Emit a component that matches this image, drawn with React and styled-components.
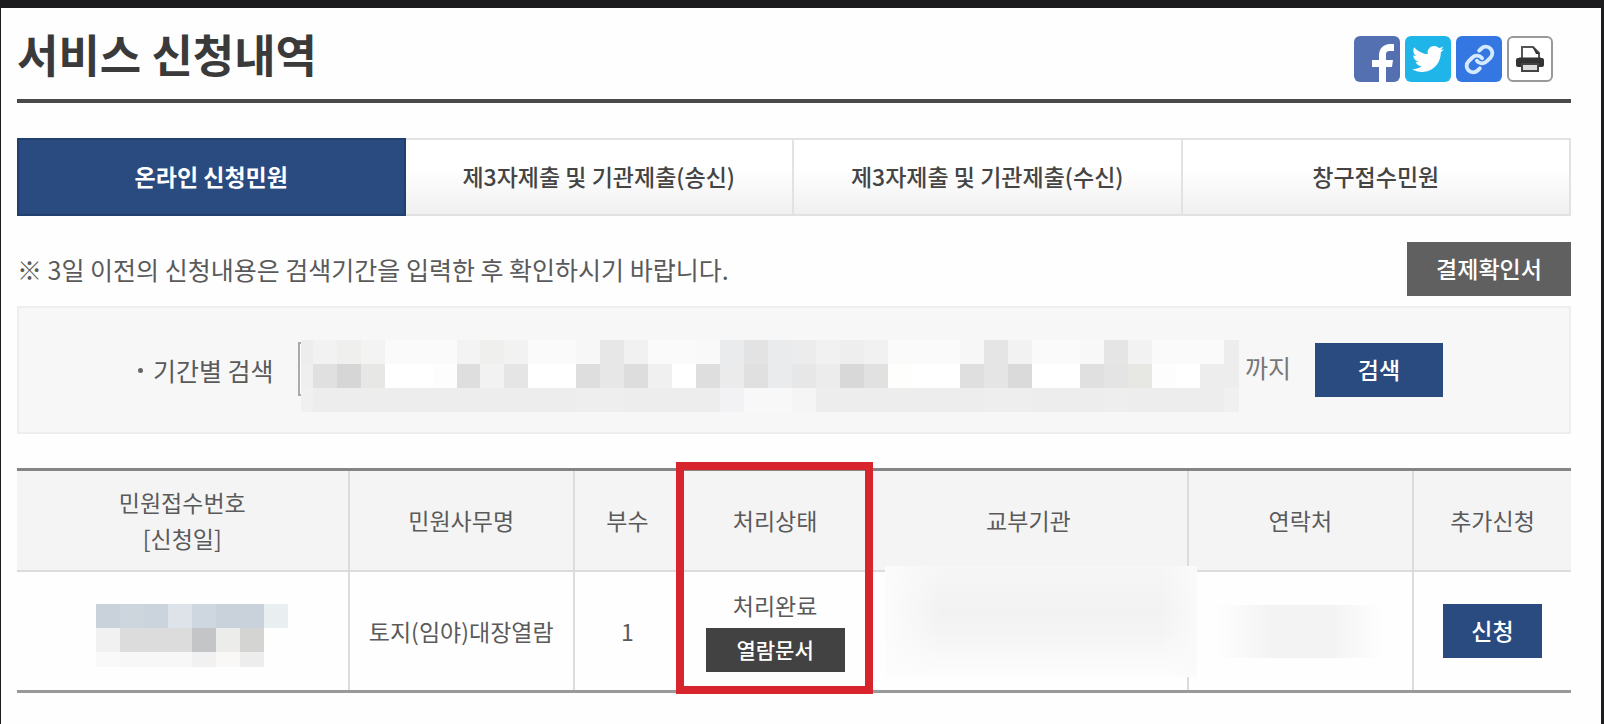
import React, { useState } from 'react';
import styled, { createGlobalStyle, css } from 'styled-components';
import { FaTwitter } from 'react-icons/fa';
import { Link as LinkIcon } from 'lucide-react';

const GlobalStyle = createGlobalStyle`
  * {
    box-sizing: border-box;
  }

  body {
    margin: 0;
    background: #fff;
    color: #5a5a5a;
    font-family: 'Noto Sans CJK KR', 'Noto Sans', sans-serif;
    font-size: 23px;
  }

  button, input {
    font-family: inherit;
  }
`;

const Page = styled.main`
  min-height: 100vh;
  padding: 28px 30px 30px 16px;
  border: solid #1c1c1e;
  border-width: 8px 3px 0 1px;
  background: #fefefe;
`;

const Header = styled.header`
  display: flex;
  align-items: flex-start;
  justify-content: space-between;
  padding-bottom: 17px;
  border-bottom: 4px solid #4a4a4a;
`;

const Title = styled.h1`
  margin: 0;
  color: #3a3a3a;
  font-size: 45px;
  font-weight: 700;
  line-height: 36px;
`;

const ShareList = styled.div`
  display: flex;
  gap: 5px;
  margin-right: 18px;
`;

const ShareButton = styled.button`
  display: flex;
  align-items: center;
  justify-content: center;
  width: 46px;
  height: 46px;
  padding: 0;
  border: ${(props) => (props.$outlined ? '2px solid #999' : '0')};
  border-radius: 6px;
  background: ${(props) => props.$color};
  color: ${(props) => props.$iconColor || '#fff'};
  overflow: hidden;
  cursor: pointer;
`;

const TabList = styled.div`
  display: grid;
  grid-template-columns: repeat(4, 1fr);
  margin-top: 35px;
`;

const Tab = styled.button`
  height: 78px;
  padding: 0 0 2px;
  border: 2px solid #e2e2e2;
  border-left-width: 0;
  background: linear-gradient(#fff 40%, #f0f0f0);
  color: #444;
  font-size: 23px;
  font-weight: 500;
  cursor: pointer;

  ${(props) =>
    props.$active &&
    css`
      border: 2px solid #22406f;
      background: #294b80;
      color: #fff;
      font-weight: 700;
    `}
`;

const NoticeRow = styled.div`
  display: flex;
  align-items: center;
  justify-content: space-between;
  margin-top: 26px;
`;

const Notice = styled.p`
  margin: 0;
  font-size: 25px;
  line-height: 36px;
`;

const buttonColors = {
  blue: '#294b80',
  gray: '#606060',
  dark: '#424242',
};

const Button = styled.button`
  width: ${(props) => props.$width}px;
  height: ${(props) => (props.$small ? 44 : 54)}px;
  padding: 0 0 3px;
  border: 0;
  background: ${(props) => buttonColors[props.$tone]};
  color: #fff;
  font-size: ${(props) => (props.$small ? 21 : 23)}px;
  font-weight: 500;
  cursor: pointer;
`;

const SearchPanel = styled.form`
  display: flex;
  align-items: center;
  height: 128px;
  margin-top: 10px;
  padding: 0 126px 0 119px;
  border: 2px solid #eee;
  background: #f7f7f7;
`;

const SearchLabel = styled.label`
  display: flex;
  align-items: center;
  gap: 10px;
  margin-right: 24px;
  font-size: 25px;
  white-space: nowrap;

  &::before {
    content: '';
    width: 5px;
    height: 5px;
    border-radius: 50%;
    background: #666;
  }
`;

/* the input and its mask share one grid cell */
const PeriodField = styled.div`
  display: grid;
  flex: 1;
  min-width: 0;
  margin-top: 12px;

  & > * {
    grid-area: 1 / 1;
  }
`;

const PeriodInput = styled.input`
  width: 50%;
  height: 54px;
  margin-top: 2px;
  padding: 0 16px;
  border: 2px solid #aaa;
  background: #fff;
  color: transparent;
`;

const PeriodMask = styled.div`
  z-index: 1;
  margin-left: 3px;
`;

const MaskRow = styled.div`
  display: flex;
  height: ${(props) => props.$height || 24}px;
`;

const MaskCell = styled.span`
  flex: ${(props) => props.$size || 24} 1 0;
  background: ${(props) => props.$color};
`;

const Suffix = styled.span`
  margin: 0 24px 6px 6px;
  color: #777;
  font-size: 25px;
`;

const TableWrap = styled.div`
  position: relative;
  margin-top: 34px;
`;

const Table = styled.table`
  width: 100%;
  border-top: 3px solid #858585;
  border-bottom: 3px solid #999;
  border-spacing: 0;
  table-layout: fixed;
  line-height: 36px;
  text-align: center;

  th,
  td {
    position: relative;
    padding: 0;
    border-right: 2px solid #dcdcdc;
  }

  th:last-child,
  td:last-child {
    border-right: 0;
  }

  th {
    height: 101px;
    padding-bottom: 2px;
    border-bottom: 2px solid #dcdcdc;
    background: #f4f4f4;
    font-weight: 400;
  }

  td {
    height: 118px;
  }
`;

const Col = styled.col`
  width: ${(props) => props.$width}%;
`;

const NumberMask = styled.div`
  width: 192px;
  margin: 8px 0 0 79px;
`;

const Status = styled.span`
  display: block;
  margin-bottom: 8px;
  line-height: 30px;
`;

const OfficeBlur = styled.div`
  position: absolute;
  z-index: 1;
  top: -6px;
  right: -10px;
  bottom: 13px;
  left: 15px;
  background:
    linear-gradient(90deg, #fcfcfc, transparent 18%, transparent 88%, #fafafa),
    linear-gradient(#f6f6f6, #f2f2f2 40%, #f4f4f4 60%, #fdfdfd);
`;

const ContactBlur = styled.div`
  height: 53px;
  margin: 0 30px 0 26px;
  background: linear-gradient(90deg, #fefefe, #f3f3f3 35%, #f3f3f3 70%, #fefefe);
`;

const Highlight = styled.div`
  position: absolute;
  z-index: 2;
  top: -6px;
  bottom: -1px;
  left: 42.4%;
  width: 12.7%;
  border: 8px solid #d8242c;
  pointer-events: none;
`;

const tabs = [
  '온라인 신청민원',
  '제3자제출 및 기관제출(송신)',
  '제3자제출 및 기관제출(수신)',
  '창구접수민원',
];

const columns = [
  { name: '민원접수번호', sub: '[신청일]', width: 21.4 },
  { name: '민원사무명', width: 14.5 },
  { name: '부수', width: 6.9 },
  { name: '처리상태', width: 12.1 },
  { name: '교부기관', width: 20.5 },
  { name: '연락처', width: 14.5 },
  { name: '추가신청', width: 10.1 },
];

const periodRows = [
  'ededed f2f2f2 efefed f3f3f3 fafafa fafafa fafafa f3f3f3 efefed f2f2f2 fafafa fafafa f7f7f7 e7e7e7 f1f1f1 fafafa fafafa f9f9f9 e9ebec e3e3e3 e9ebed ececec f1f1f1 eeeeee f1f1f1 fafafa fafafa fafafa f7f7f7 e5e5e5 f2f2f2 fafafa fafafa f8f8f8 e5e5e5 f2f2f2 fafafa fafafa fafafa ededed',
  'efefef e0e0e0 d6d6d6 e7e7e5 ffffff ffffff fdfdfd dedede f2f2f2 e5e5e5 ffffff ffffff dedede e7e7e7 dddddd f0f0f0 ffffff dedede ebebeb e0e0e0 e9ebed e7e7e7 ececec d8d8d8 e1e1e1 fefefc ffffff ffffff dfdfdf e5e5e5 dadada ffffff ffffff e0e0e0 e4e4e4 e7e7e4 fdfdfd ffffff ededed ededed',
  'f0f0f0 ededed ededed ededed ededed ededed ededed ededed ededed ededed ededed ededed eeeeee eeeeee ededed ededed ededed ededed f2f2f5 f8f8f8 f8f8f8 f5f5f5 ededed ededed ededed ededed ededed ededed ededed eeeeee eeeeee ededed ededed ededed eeeeee ededed ededed ededed ededed f0f0f0',
].map((row) => row.split(' '));

const numberRows = [
  { height: 24, colors: 'c9d1da cdd5dd cbd4dd dde3e8 ced6df c9d1da c9d1da e9eef1' },
  { height: 24, colors: 'f1f1f1 dcdcdc dcdcdc dcdcdc c3c5c7 ececea d4d4d2 fefefe' },
  { height: 15, colors: 'f9f9f9 f7f7f7 f7f7f7 f7f7f7 f1f1f1 faf8f6 ededed fefefe' },
];

const periodCellSize = (index, count) => {
  if (index === 0) return 12;
  return index === count - 1 ? 15 : 24;
};

const FacebookMark = () => (
  <svg width='46' height='46' viewBox='0 0 46 46' aria-hidden='true'>
    <path
      d='M25 46V31h-7v-7h7v-4c0-8 4-11 10-12h5v7h-4c-3 0-4 1-4 4v5h7l-1 7h-6v15z'
      fill='#fff'
    />
  </svg>
);

const PrinterMark = () => (
  <svg width='30' height='30' viewBox='0 0 30 30' aria-hidden='true'>
    <rect x='1' y='14' width='28' height='9' rx='2' fill='#333' />
    <path d='M7 15V3h11l6 6v6z' fill='#fff' stroke='#555' strokeWidth='2' />
    <path d='M17 2l8 8h-4z' fill='#333' />
    <path d='M4 15h22' stroke='#333' strokeWidth='3' />
    <rect x='7' y='20' width='16' height='7' fill='#ddd' stroke='#444' strokeWidth='2' />
  </svg>
);

const App = () => {
  const [activeTab, setActiveTab] = useState(0);

  return (
    <>
      <GlobalStyle />
      <Page>
        <Header>
          <Title>서비스 신청내역</Title>
          <ShareList>
            <ShareButton type='button' $color='#5470b0' aria-label='페이스북'>
              <FacebookMark />
            </ShareButton>
            <ShareButton type='button' $color='#1fb5e9' aria-label='트위터'>
              <FaTwitter size={32} />
            </ShareButton>
            <ShareButton
              type='button'
              $color='#3476e2'
              $iconColor='#d5e9ff'
              aria-label='링크 복사'
            >
              <LinkIcon size={31} strokeWidth={3} />
            </ShareButton>
            <ShareButton type='button' $color='#fff' $outlined aria-label='인쇄'>
              <PrinterMark />
            </ShareButton>
          </ShareList>
        </Header>

        <TabList role='tablist'>
          {tabs.map((tab, index) => (
            <Tab
              key={tab}
              type='button'
              role='tab'
              aria-selected={index === activeTab}
              $active={index === activeTab}
              onClick={() => setActiveTab(index)}
            >
              {tab}
            </Tab>
          ))}
        </TabList>

        <NoticeRow>
          <Notice>
            ※ 3일 이전의 신청내용은 검색기간을 입력한 후 확인하시기 바랍니다.
          </Notice>
          <Button type='button' $tone='gray' $width={164}>
            결제확인서
          </Button>
        </NoticeRow>

        <SearchPanel onSubmit={(e) => e.preventDefault()}>
          <SearchLabel htmlFor='period'>기간별 검색</SearchLabel>
          <PeriodField>
            <PeriodInput id='period' type='text' />
            <PeriodMask>
              {periodRows.map((row, rowIndex) => (
                <MaskRow key={rowIndex}>
                  {row.map((color, index) => (
                    <MaskCell
                      key={index}
                      $color={`#${color}`}
                      $size={periodCellSize(index, row.length)}
                    />
                  ))}
                </MaskRow>
              ))}
            </PeriodMask>
          </PeriodField>
          <Suffix>까지</Suffix>
          <Button type='submit' $tone='blue' $width={128}>
            검색
          </Button>
        </SearchPanel>

        <TableWrap>
          <Table>
            <colgroup>
              {columns.map((column) => (
                <Col key={column.name} $width={column.width} />
              ))}
            </colgroup>
            <thead>
              <tr>
                {columns.map((column) => (
                  <th key={column.name} scope='col'>
                    {column.name}
                    {column.sub && (
                      <>
                        <br />
                        {column.sub}
                      </>
                    )}
                  </th>
                ))}
              </tr>
            </thead>
            <tbody>
              <tr>
                <td>
                  <NumberMask>
                    {numberRows.map((row, rowIndex) => (
                      <MaskRow key={rowIndex} $height={row.height}>
                        {row.colors.split(' ').map((color, index) => (
                          <MaskCell key={index} $color={`#${color}`} />
                        ))}
                      </MaskRow>
                    ))}
                  </NumberMask>
                </td>
                <td>토지(임야)대장열람</td>
                <td>1</td>
                <td>
                  <Status>처리완료</Status>
                  <Button type='button' $tone='dark' $width={139} $small>
                    열람문서
                  </Button>
                </td>
                <td>
                  <OfficeBlur />
                </td>
                <td>
                  <ContactBlur />
                </td>
                <td>
                  <Button type='button' $tone='blue' $width={99}>
                    신청
                  </Button>
                </td>
              </tr>
            </tbody>
          </Table>
          <Highlight />
        </TableWrap>
      </Page>
    </>
  );
};

export default App;
